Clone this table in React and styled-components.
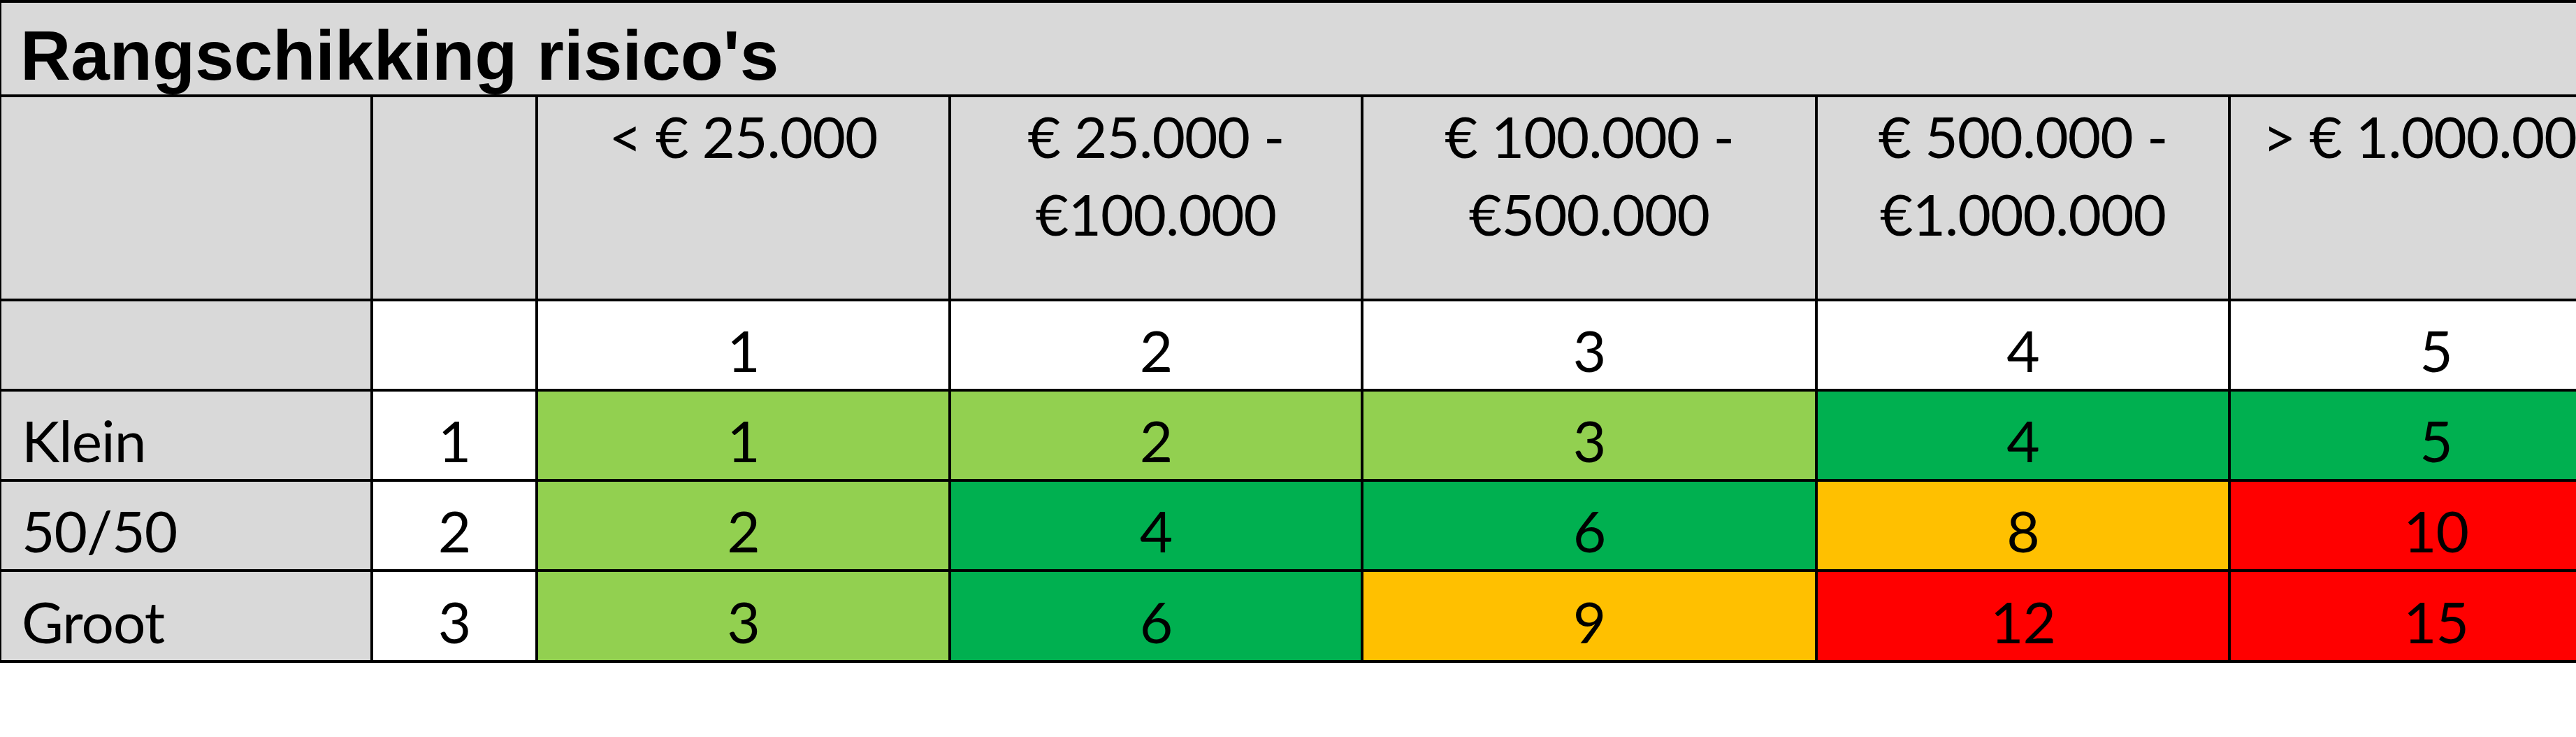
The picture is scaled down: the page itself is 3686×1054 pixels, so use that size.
import React from 'react';
import styled, { createGlobalStyle } from 'styled-components';

const GlobalStyle = createGlobalStyle`
  html, body {
    margin: 0;
    padding: 0;
    background: #ffffff;
    overflow: hidden;
  }
`;

const colors = {
  grey: '#d9d9d9',
  light: '#92d050',
  green: '#00b050',
  amber: '#ffc000',
  red: '#ff0000',
};

const ranges = [
  ['< € 25.000'],
  ['€ 25.000 -', '€100.000'],
  ['€ 100.000 -', '€500.000'],
  ['€ 500.000 -', '€1.000.000'],
  ['> € 1.000.000'],
];

const odds = [
  { label: 'Klein', weight: 1 },
  { label: '50/50', weight: 2 },
  { label: 'Groot', weight: 3 },
];

// kleur per score, zoals in de spreadsheet
const levelFor = score => {
  if (score <= 3) return 'light';
  if (score <= 6) return 'green';
  if (score <= 9) return 'amber';
  return 'red';
};

const Sheet = styled.div`
  display: grid;
  grid-template-columns: 528px 232px 587px 586px 646px 587px 587px;
  grid-template-rows: 131px 288px 125px 125px 125px 126px;
  gap: 4px;
  padding: 4px;
  margin-left: -2px;
  width: max-content;
  background: #000000;
  font-family: Lato, 'Liberation Sans', sans-serif;
  font-size: 82px;
  letter-spacing: -1px;
  color: #000000;
`;

const Title = styled.div`
  grid-column: 1 / -1;
  background: ${colors.grey};
  padding: 25px 0 0 27px;
  font-family: 'Liberation Sans', Arial, sans-serif;
  font-weight: 700;
  font-size: 100px;
  line-height: 100px;
  letter-spacing: 0;
  white-space: nowrap;
`;

const Blank = styled.div`
  background: ${p => (p.$white ? '#ffffff' : colors.grey)};
`;

const RangeHead = styled.div`
  background: ${colors.grey};
  text-align: center;
  line-height: 111px;
  white-space: nowrap;
`;

const Value = styled.div`
  display: flex;
  align-items: flex-end;
  justify-content: center;
  padding-bottom: 7px;
  line-height: 1.2;
  background: ${p => (p.$level ? colors[p.$level] : '#ffffff')};
`;

const RowLabel = styled.div`
  display: flex;
  align-items: flex-end;
  padding: 0 0 7px 29px;
  line-height: 1.2;
  background: ${colors.grey};
`;

export default function App() {
  return (
    <>
      <GlobalStyle />
      <Sheet>
        <Title>Rangschikking risico's</Title>

        <Blank />
        <Blank />
        {ranges.map((lines, i) => (
          <RangeHead key={i}>
            {lines.map((l, j) => (
              <div key={j}>{l}</div>
            ))}
          </RangeHead>
        ))}

        <Blank />
        <Blank $white />
        {ranges.map((_, i) => (
          <Value key={i}>{i + 1}</Value>
        ))}

        {odds.map(row => (
          <React.Fragment key={row.label}>
            <RowLabel>{row.label}</RowLabel>
            <Value>{row.weight}</Value>
            {ranges.map((_, i) => {
              const score = row.weight * (i + 1);
              return (
                <Value key={i} $level={levelFor(score)}>
                  {score}
                </Value>
              );
            })}
          </React.Fragment>
        ))}
      </Sheet>
    </>
  );
}
